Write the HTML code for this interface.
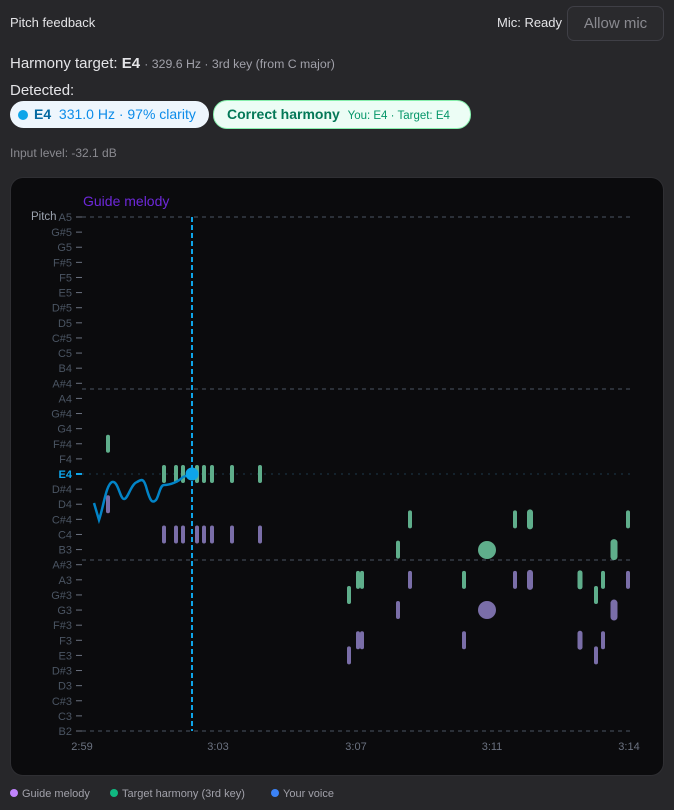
<!DOCTYPE html>
<html><head><meta charset="utf-8"><style>
body{margin:0;width:674px;height:810px;background:#27272a;font-family:"Liberation Sans",sans-serif;color:#e4e4e7;position:relative;overflow:hidden}
.a{position:absolute;white-space:nowrap}
</style></head><body>
<div class="a" style="left:10px;top:15px;font-size:13px;color:#e4e4e7">Pitch feedback</div>
<div class="a" style="left:497px;top:15px;font-size:13px;color:#e4e4e7">Mic: Ready</div>
<div class="a" style="left:567px;top:6px;width:97px;height:35px;box-sizing:border-box;border:1px solid #3f3f46;border-radius:7px;background:#2a2a2d;color:#8a8a90;font-size:15px;line-height:33px;text-align:center">Allow mic</div>
<div class="a" style="left:10px;top:55px;font-size:15px;color:#e4e4e7">Harmony target: <b>E4</b> <span style="font-size:12.3px;color:#a1a1aa">· 329.6 Hz · 3rd key (from C major)</span></div>
<div class="a" style="left:10px;top:82px;font-size:15px;color:#e4e4e7">Detected:</div>
<div class="a" style="left:10px;top:101px;width:199px;height:27px;border-radius:14px;background:#eef6fd;font-size:14px;line-height:27px;color:#0c8ce9"><span style="display:inline-block;width:10px;height:10px;border-radius:50%;background:#0ea5e9;margin:0 6px 0 8px;vertical-align:-1px"></span><b style="color:#0369a1">E4</b>&nbsp; 331.0 Hz · 97% clarity</div>
<div class="a" style="left:213px;top:100px;width:258px;height:29px;border-radius:14px;background:#ecfdf5;border:1px solid #86efac;font-size:14px;line-height:27px;color:#047857;padding-left:13px;box-sizing:border-box"><b>Correct harmony</b> &nbsp;<span style="font-size:11.5px;color:#059669">You: E4 · Target: E4</span></div>
<div class="a" style="left:10px;top:146px;font-size:12px;color:#8a8a90">Input level: -32.1 dB</div>
<div class="a" style="left:11px;top:178px;width:652px;height:597px;background:#0b0b0d;border-radius:12px;box-shadow:0 0 0 1px #2f2f33"></div>
<svg class="a" style="left:0;top:0" width="674" height="810" font-family="Liberation Sans, sans-serif">
<text x="83" y="206" font-size="14" fill="#6d28d9">Guide melody</text>
<text x="31" y="220" font-size="11.5" fill="#9ca3af">Pitch</text>
<g font-size="11" fill="#4b5563" text-anchor="end" id="lbl"></g>
<g stroke="#4b5563" stroke-dasharray="4 4" stroke-width="1">
<line x1="82" y1="217" x2="631" y2="217"/><line x1="82" y1="389" x2="631" y2="389"/><line x1="82" y1="560" x2="631" y2="560"/><line x1="82" y1="731" x2="631" y2="731"/>
</g>
<line x1="82" y1="474" x2="631" y2="474" stroke="#1e3a4a" stroke-dasharray="2 5"/>
<line x1="192" y1="217" x2="192" y2="731" stroke="#0ea5e9" stroke-width="2" stroke-dasharray="5 3"/>
<g stroke-linecap="round" stroke-width="4" stroke="#5fae8b" id="gn"></g>
<g stroke-linecap="round" stroke-width="4" stroke="#7a6ea8" id="pp"></g>
<circle cx="487" cy="550" r="9" fill="#5fae8b"/><circle cx="487" cy="610" r="9" fill="#7a6ea8"/>
<path d="M94 503 L99 520 C104 505 106 485 112 482 C118 480 120 499 124 499 C128 499 131 484 137 482 C142 479 144 478 147 490 C150 500 152 504 156 500 C159 496 160 485 164 485 C170 485 178 482 183 477 L192 474" fill="none" stroke="#0284c7" stroke-width="2.5"/>
<circle cx="192" cy="474" r="6.5" fill="#0ea5e9"/>
<g font-size="11" fill="#6b7280" text-anchor="middle"><text x="82" y="750">2:59</text><text x="218" y="750">3:03</text><text x="356" y="750">3:07</text><text x="492" y="750">3:11</text><text x="629" y="750">3:14</text></g>
<circle cx="14" cy="793" r="4" fill="#c084fc"/><circle cx="114" cy="793" r="4" fill="#10b981"/><circle cx="275" cy="793" r="4" fill="#3b82f6"/>
<g font-size="11" fill="#a1a1aa"><text x="22" y="797">Guide melody</text><text x="122" y="797">Target harmony (3rd key)</text><text x="283" y="797">Your voice</text></g>
</svg>
<script>
var n=["A5","G#5","G5","F#5","F5","E5","D#5","D5","C#5","C5","B4","A#4","A4","G#4","G4","F#4","F4","E4","D#4","D4","C#4","C4","B3","A#3","A3","G#3","G3","F#3","F3","E3","D#3","D3","C#3","C3","B2"];
var NS="http://www.w3.org/2000/svg",L=document.getElementById("lbl");
function Y(i){return 217+i*514/34}
n.forEach(function(t,i){var y=Y(i);var e=document.createElementNS(NS,"text");e.setAttribute("x",72);e.setAttribute("y",y+4);e.textContent=t;if(t=="E4"){e.setAttribute("fill","#0ea5e9");e.setAttribute("font-weight","bold")}L.appendChild(e);var l=document.createElementNS(NS,"line");l.setAttribute("x1",76);l.setAttribute("x2",82);l.setAttribute("y1",y);l.setAttribute("y2",y);l.setAttribute("stroke",t=="E4"?"#0ea5e9":"#6b7280");l.setAttribute("stroke-width",t=="E4"?2:1);L.appendChild(l)});
function add(g,xs,name,w){var G=document.getElementById(g);var y=Y(n.indexOf(name));xs.forEach(function(x){var l=document.createElementNS(NS,"line");l.setAttribute("x1",x);l.setAttribute("x2",x);l.setAttribute("y1",y-7);l.setAttribute("y2",y+7);if(w)l.setAttribute("stroke-width",w);G.appendChild(l)})}
add("gn",[164,176,183,197,204,212,232,260],"E4");add("gn",[108],"F#4");
add("pp",[164,176,183,197,204,212,232,260],"C4");add("pp",[108],"D4");
add("gn",[410,515,628],"C#4");add("gn",[530],"C#4",6);add("gn",[398],"B3");add("gn",[614],"B3",7);
add("gn",[358,362,464,603],"A3");add("gn",[580],"A3",5);add("pp",[410,515,628],"A3");add("pp",[530],"A3",6);
add("gn",[349,596],"G#3");add("pp",[398],"G3");add("pp",[614],"G3",7);
add("pp",[358,362,464,603],"F3");add("pp",[580],"F3",5);add("pp",[349,596],"E3");
</script>
</body></html>
